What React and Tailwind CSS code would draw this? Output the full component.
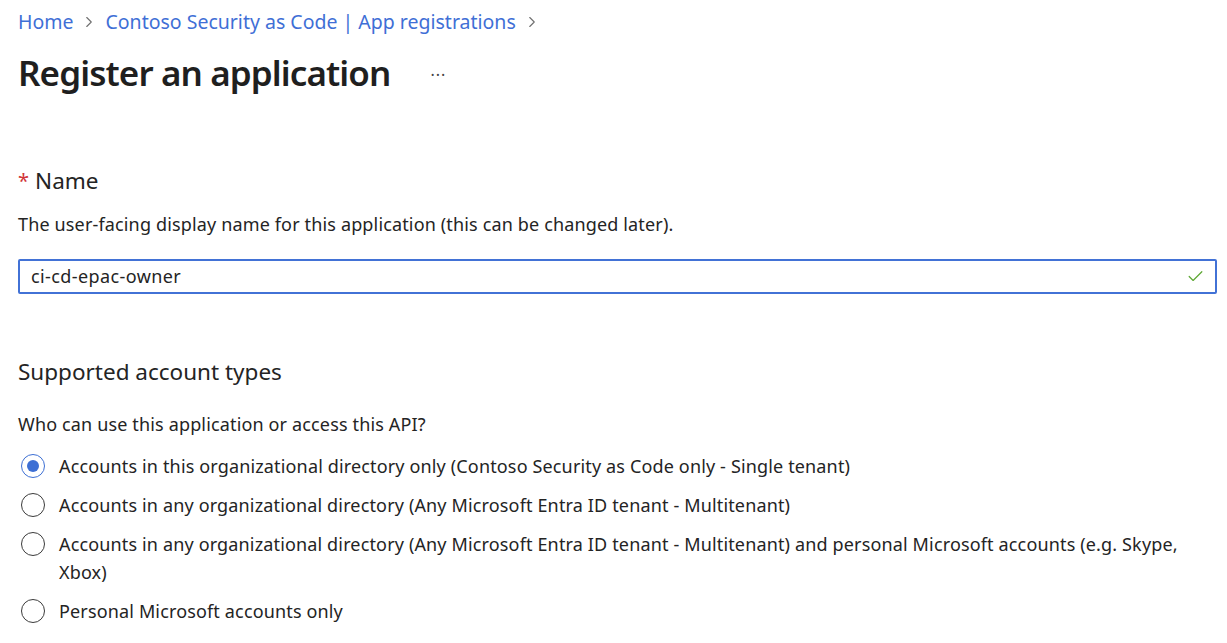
import { ChevronRight, Check } from "lucide-react";

const options = [
  { label: "Accounts in this organizational directory only (Contoso Security as Code only - Single tenant)", checked: true },
  { label: "Accounts in any organizational directory (Any Microsoft Entra ID tenant - Multitenant)" },
  { label: "Accounts in any organizational directory (Any Microsoft Entra ID tenant - Multitenant) and personal Microsoft accounts (e.g. Skype, Xbox)" },
  { label: "Personal Microsoft accounts only" },
];

function Radio({ checked }) {
  return (
    <span
      className={`mt-[2px] w-[24px] h-[24px] shrink-0 rounded-full border bg-white flex items-center justify-center ${
        checked ? "border-[#3d6fd4]" : "border-[#3b3b3b]"
      }`}
    >
      {checked && <span className="w-[12px] h-[12px] rounded-full bg-[#3d6fd4]" />}
    </span>
  );
}

export default function App() {
  return (
    <div className="min-h-screen bg-white text-[#242424] font-['Noto_Sans',sans-serif] pl-[18px] pr-[10px]">
      {/* breadcrumb */}
      <nav className="h-[44px] flex items-center gap-[7px] text-[19.5px] text-[#3f6fd6]">
        <span>Home</span>
        <ChevronRight className="w-[18px] h-[18px] text-[#707070]" strokeWidth={1.5} />
        <span>Contoso Security as Code | App registrations</span>
        <ChevronRight className="w-[18px] h-[18px] text-[#707070]" strokeWidth={1.5} />
      </nav>

      <div className="flex items-center h-[58px]">
        <h1 className="text-[35px] font-semibold tracking-[-0.9px] text-[#1f1f1f]">Register an application</h1>
        <span className="ml-[40px] text-[16px] text-[#444] tracking-[1px] mt-[4px]">···</span>
      </div>

      {/* name */}
      <div className="mt-[61px] flex items-center h-[36px] text-[22.5px]">
        <span className="text-[#d13438] mr-[6px] text-[20px]">*</span>
        <span>Name</span>
      </div>
      <p className="mt-[11px] text-[18px] tracking-[0.15px] h-[28px] flex items-center">
        The user-facing display name for this application (this can be changed later).
      </p>
      <div className="mt-[21px] h-[35px] border-2 border-[#4272d6] rounded-[2px] flex items-center pl-[11px] pr-[8px] text-[18px] tracking-[0.4px]">
        <span className="flex-1">ci-cd-epac-owner</span>
        <Check className="w-[19px] h-[19px] text-[#5ca732] mr-[2px]" strokeWidth={1.5} />
      </div>

      {/* account types */}
      <h2 className="mt-[60px] h-[36px] flex items-center text-[22.5px]">Supported account types</h2>
      <p className="mt-[20px] h-[28px] flex items-center text-[18px] tracking-[0.15px]">
        Who can use this application or access this API?
      </p>
      <div className="mt-[14px] flex flex-col gap-[11px]">
        {options.map((o) => (
          <label key={o.label} className="flex items-start gap-[14px] pl-[3px] text-[18px] leading-[28px] tracking-[0.15px]">
            <Radio checked={o.checked} />
            <span className="max-w-[1130px]">{o.label}</span>
          </label>
        ))}
      </div>
    </div>
  );
}
